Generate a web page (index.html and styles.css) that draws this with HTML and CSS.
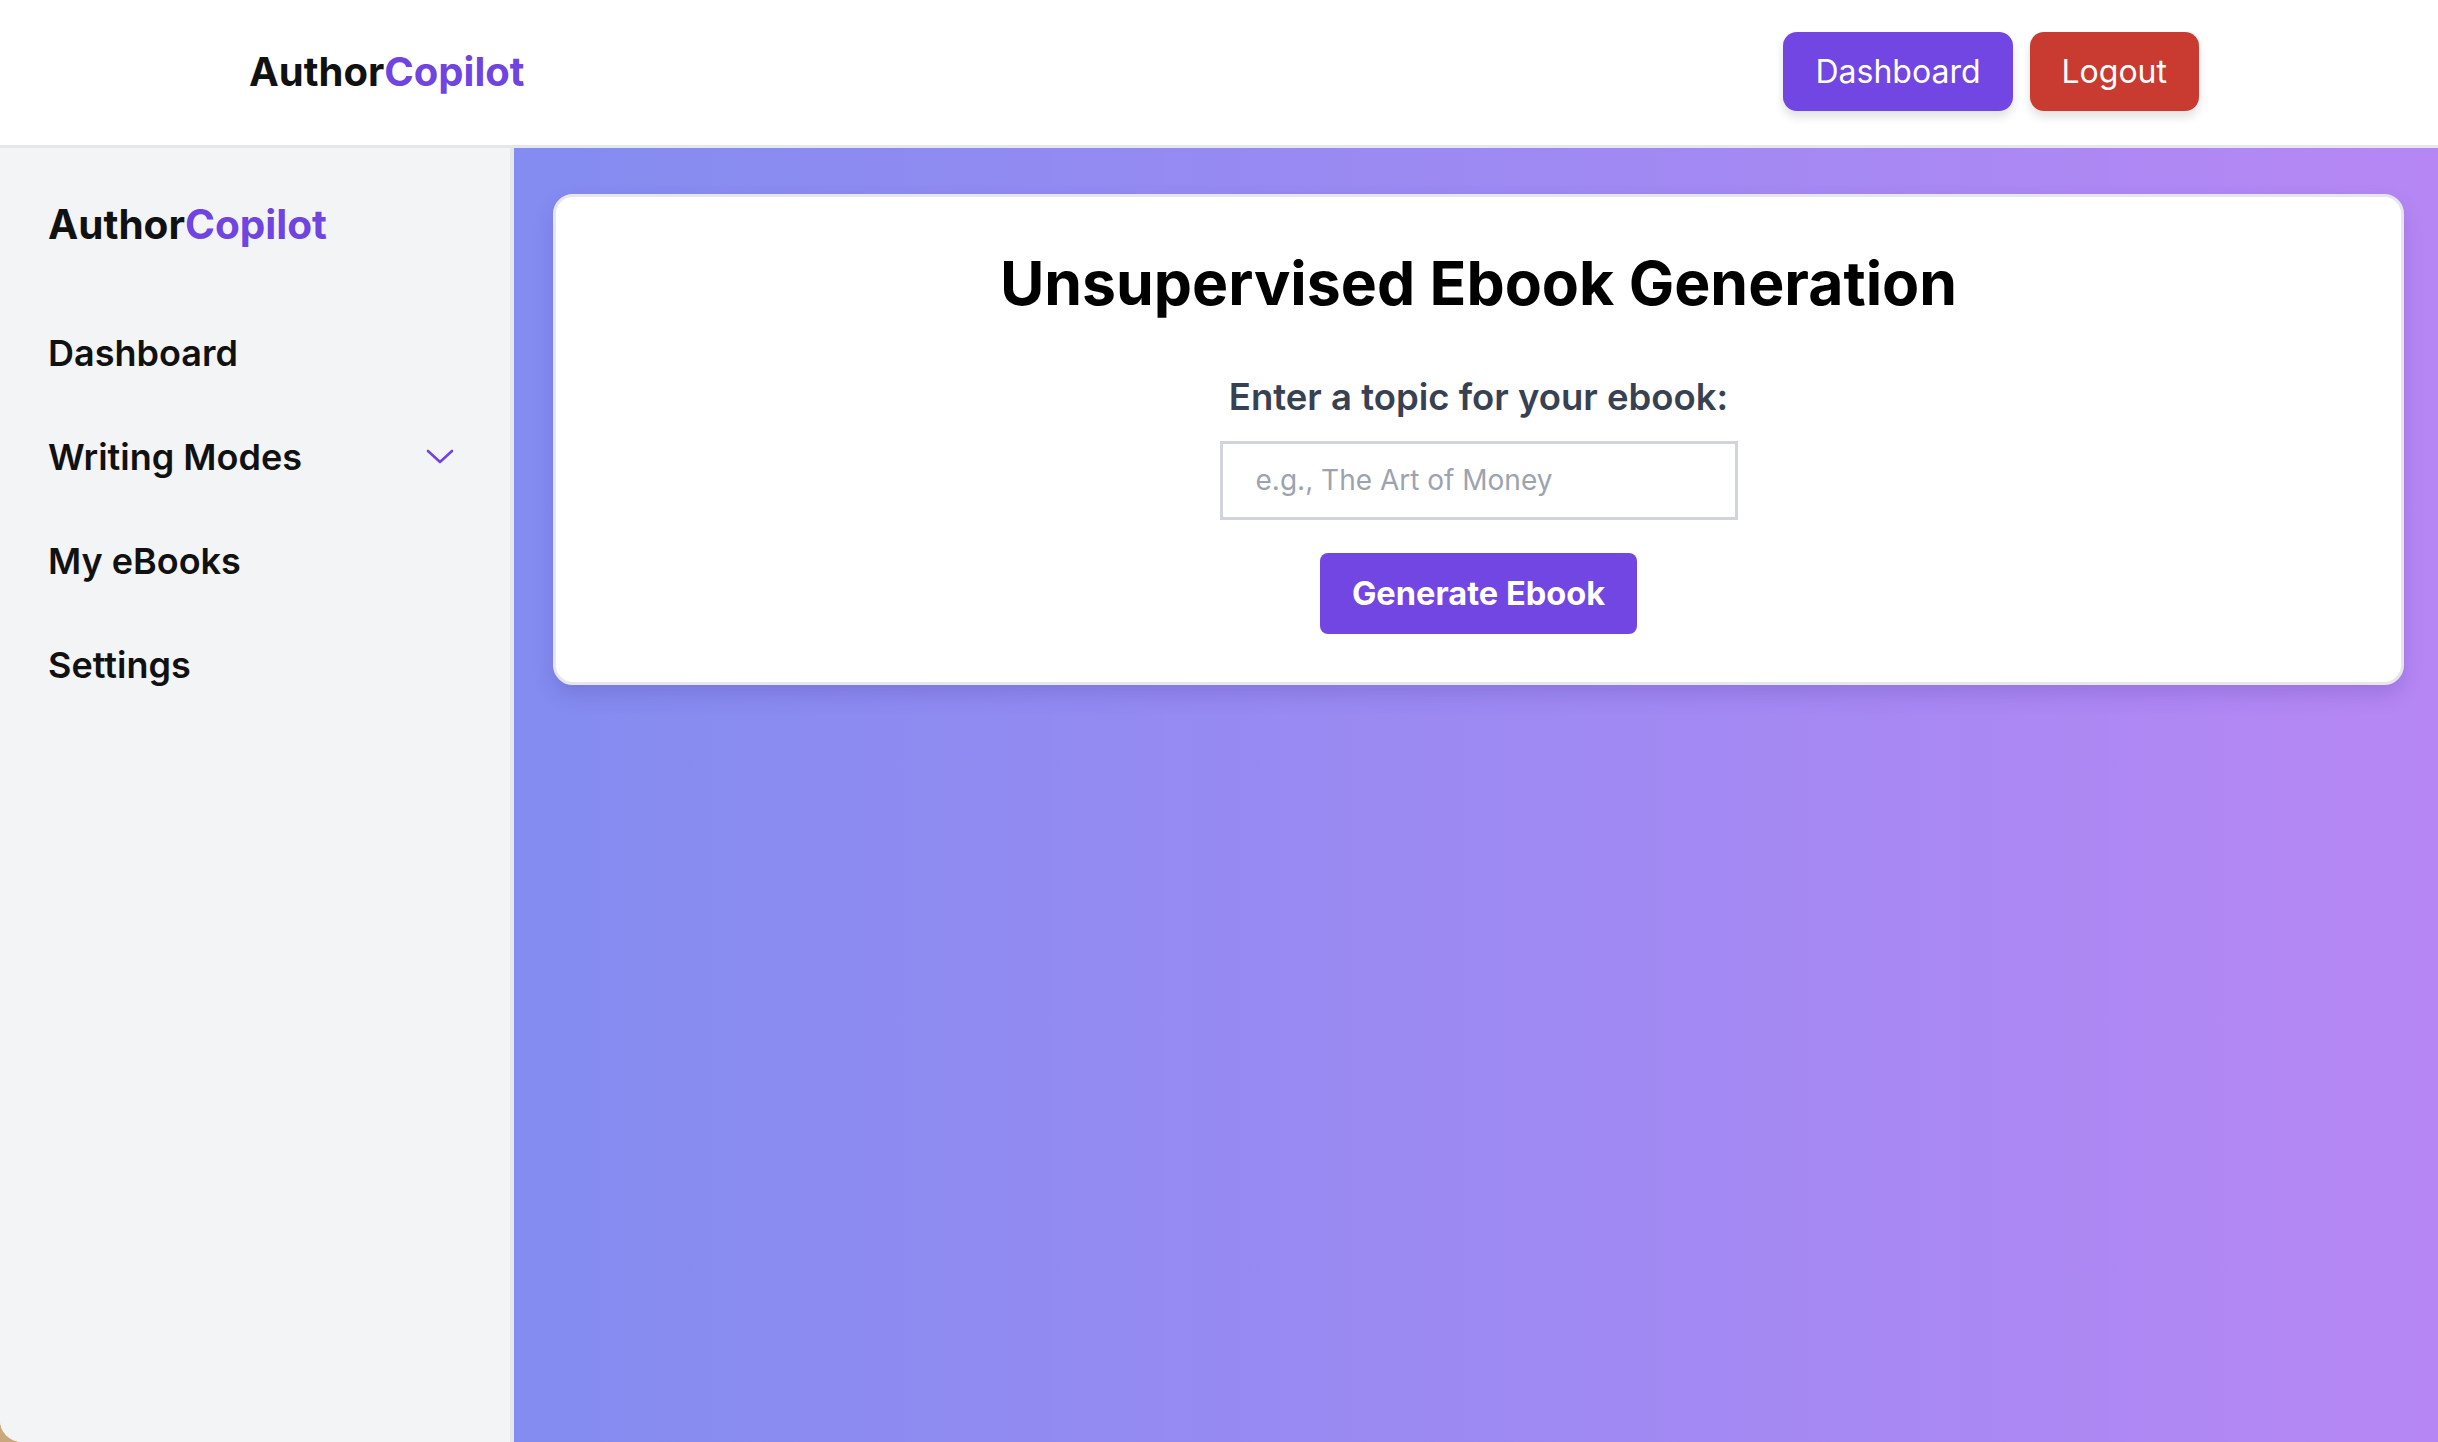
FILE: index.html
```html
<!DOCTYPE html>
<html lang="en">
<head>
<meta charset="utf-8">
<title>AuthorCopilot</title>
<link rel="stylesheet" href="styles.css">
</head>
<body>
<div class="window">
  <header class="topbar">
    <div class="brand"><span class="brand-dark">Author</span><span class="brand-accent">Copilot</span></div>
    <nav class="top-actions">
      <button class="btn btn-purple">Dashboard</button>
      <button class="btn btn-red">Logout</button>
    </nav>
  </header>
  <div class="body-row">
    <aside class="sidebar">
      <div class="brand side-brand"><span class="brand-dark">Author</span><span class="brand-accent">Copilot</span></div>
      <ul class="side-nav">
        <li class="side-item">Dashboard</li>
        <li class="side-item has-caret">Writing Modes
          <svg class="caret" viewBox="0 0 28 20" width="28" height="20"><path d="M2 4 L14 15 L26 4" fill="none" stroke="#7044e0" stroke-width="2.6" stroke-linecap="round" stroke-linejoin="round"/></svg>
        </li>
        <li class="side-item">My eBooks</li>
        <li class="side-item">Settings</li>
      </ul>
    </aside>
    <main class="main">
      <section class="card">
        <h1 class="card-title">Unsupervised Ebook Generation</h1>
        <label class="card-label" for="topic">Enter a topic for your ebook:</label>
        <input id="topic" class="card-input" type="text" placeholder="e.g., The Art of Money">
        <button class="gen-btn">Generate Ebook</button>
      </section>
    </main>
  </div>
</div>
</body>
</html>
```
FILE: styles.css
```css
* { box-sizing: border-box; }
html, body { margin: 0; padding: 0; height: 100%; }
body {
  font-family: Inter, "Noto Sans", sans-serif;
  background: #c9a97c;
  color: #111;
}
.window {
  height: 1442px;
  display: flex;
  flex-direction: column;
  background: #fff;
  border-bottom-left-radius: 22px;
  overflow: hidden;
}
.topbar {
  height: 148px;
  flex: none;
  display: flex;
  align-items: center;
  justify-content: space-between;
  padding: 0 239px 3px 249px;
  background: #fff;
  border-bottom: 3px solid #e5e7eb;
}
.brand {
  font-weight: 700;
  font-size: 40px;
}
.side-brand { font-size: 40.5px; }
.brand-dark { color: #111; }
.brand-accent { color: #7044e0; }
.top-actions { display: flex; gap: 17px; }
.btn {
  font-family: inherit;
  font-size: 32px;
  color: #fff;
  border: none;
  height: 79px;
  border-radius: 14px;
  box-shadow: 0 6px 10px rgba(0,0,0,0.12);
  padding: 0 32px;
}
.btn-purple { background: #7246e2; }
.btn-red { background: #c93b31; }
.body-row {
  flex: 1;
  display: flex;
  min-height: 0;
}
.sidebar {
  width: 514px;
  flex: none;
  background: #f3f4f6;
  border-right: 4px solid #e5e7eb;
  padding: 52px 48px;
}
.side-brand { margin-bottom: 52px; }
.side-nav { list-style: none; margin: 0; padding: 0; }
.side-item {
  font-size: 36px;
  font-weight: 600;
  color: #111;
  height: 104px;
  display: flex;
  align-items: center;
  justify-content: space-between;
  padding-right: 8px;
}
.caret { display: block; }
.main {
  flex: 1;
  background: linear-gradient(90deg, #838cf0 0%, #b687f4 100%);
  padding: 46px 34px 0 39px;
}
.card {
  background: #fff;
  border: 3px solid #e5e7eb;
  border-radius: 20px;
  box-shadow: 0 10px 20px rgba(60,40,140,0.18);
  display: flex;
  flex-direction: column;
  align-items: center;
  padding: 50px 0 48px;
}
.card-title {
  margin: 0;
  font-size: 60.7px;
  font-weight: 700;
  color: #000;
  line-height: 1.2;
}
.card-label {
  margin-top: 55px;
  font-size: 36.5px;
  font-weight: 600;
  color: #374151;
}
.card-input {
  margin-top: 22px;
  width: 518px;
  height: 79px;
  border: 3px solid #d1d5db;
  border-radius: 0;
  font-family: inherit;
  font-size: 28px;
  padding: 0 33px;
  outline: none;
}
.card-input::placeholder { color: #9ca3af; }
.gen-btn {
  margin-top: 33px;
  width: 317px;
  height: 81px;
  border: none;
  border-radius: 8px;
  background: #7246e2;
  color: #fff;
  font-family: inherit;
  font-size: 32.6px;
  font-weight: 700;
}
```
